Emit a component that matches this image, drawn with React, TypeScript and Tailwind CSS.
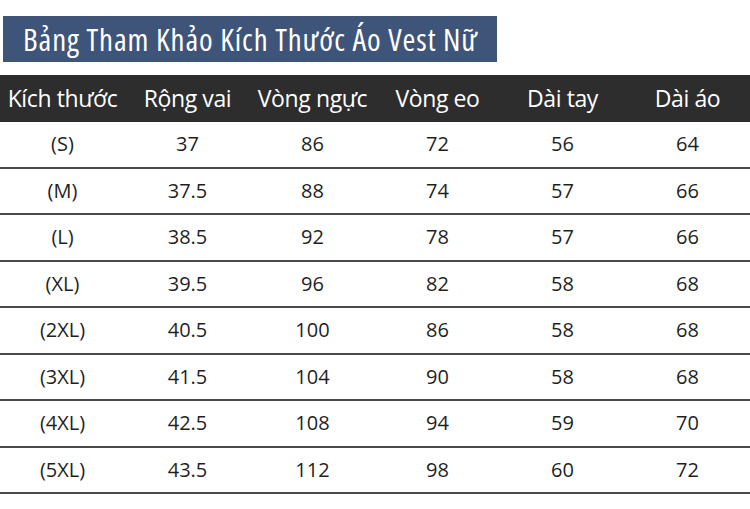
import React from "react";

const headers = ["Kích thước", "Rộng vai", "Vòng ngực", "Vòng eo", "Dài tay", "Dài áo"];
const rows = [
  ["(S)", "37", "86", "72", "56", "64"],
  ["(M)", "37.5", "88", "74", "57", "66"],
  ["(L)", "38.5", "92", "78", "57", "66"],
  ["(XL)", "39.5", "96", "82", "58", "68"],
  ["(2XL)", "40.5", "100", "86", "58", "68"],
  ["(3XL)", "41.5", "104", "90", "58", "68"],
  ["(4XL)", "42.5", "108", "94", "59", "70"],
  ["(5XL)", "43.5", "112", "98", "60", "72"],
];

export default function App() {
  return (
    <div
      className="w-[750px] h-[509px] bg-white overflow-hidden"
      style={{ fontFamily: '"Open Sans", "Noto Sans", sans-serif' }}
    >
      <div className="pt-[16px] pl-[3px]">
        <div className="w-[494px] h-[46px] bg-[#3f5479] flex items-center pl-[20px] overflow-hidden">
          <span className="text-white text-[31px] leading-none whitespace-nowrap font-stretch-condensed tracking-[0.9px]">
            Bảng Tham Khảo Kích Thước Áo Vest Nữ
          </span>
        </div>
      </div>
      <div className="mt-[13px] h-[47px] bg-[#2d2d2d] grid grid-cols-6 items-center">
        {headers.map((h) => (
          <div key={h} className="text-center text-white text-[23px] leading-none tracking-[-0.4px] whitespace-nowrap">
            {h}
          </div>
        ))}
      </div>
      <div>
        {rows.map((r, i) => (
          <div
            key={i}
            className="h-[46.5px] border-b-2 border-[#4a4a4a] grid grid-cols-6 items-center"
          >
            {r.map((c, j) => (
              <div key={j} className="text-center text-[#1f1f1f] text-[20px] leading-none">
                {c}
              </div>
            ))}
          </div>
        ))}
      </div>
    </div>
  );
}
